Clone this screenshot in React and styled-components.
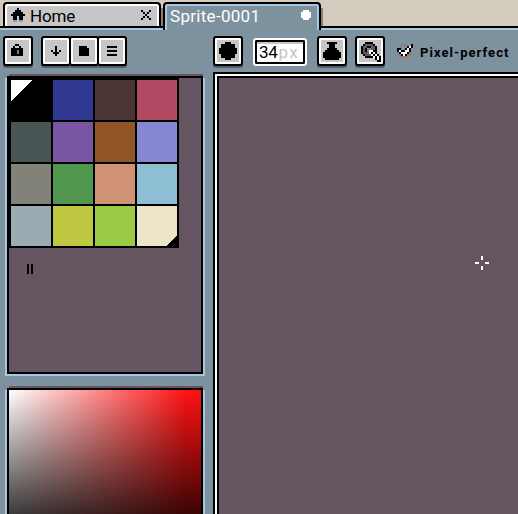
import React from "react";
import styled, { createGlobalStyle, css } from "styled-components";

const Global = createGlobalStyle`
  * { box-sizing: border-box; }
  html, body { margin: 0; overflow: hidden; background: #7d929e; }
  body { font-family: Roboto, "Liberation Sans", sans-serif; color: #000; }
  svg { display: block; flex: none; }
`;

const Window = styled.div`
  width: 518px;
  height: 514px;
  overflow: hidden;
  background: #7d929e;
  display: flex;
  flex-direction: column;
`;

const TabBar = styled.div`
  height: 30px;
  flex: none;
  display: flex;
  align-items: flex-start;
  padding: 2px 0 0 3px;
  background: linear-gradient(#d3cbbe 26px, #000 26px, #000 28px, #a5c8df 28px);
`;

const Tab = styled.div`
  display: flex;
  align-items: center;
  flex: none;
  height: ${(p) => (p.$active ? 28 : 24)}px;
  width: 158px;
  padding: ${(p) => (p.$active ? "0 8px 4px 5px" : "0 8px 0 6px")};
  border: 2px solid #000;
  border-bottom: 0;
  border-radius: 4px 4px 0 0;
  color: ${(p) => (p.$active ? "#fff" : "#000")};
  background: ${(p) => (p.$active ? "#7d929e" : "#c6c6c6")};
  box-shadow:
    inset 2px 2px 0 ${(p) => (p.$active ? "#a5c8df" : "#fff")},
    inset -2px 0 0 ${(p) => (p.$active ? "#a5c8df" : "#fff")};
`;

const TabShade = styled.div`
  width: 2px;
  height: 18px;
  margin-top: 6px;
  background: #967a6d;
`;

const Label = styled.span`
  font-size: 17px;
  line-height: 20px;
  padding-top: 2px;
  white-space: pre;
  letter-spacing: ${(p) => p.$spacing || 0}px;
  margin-left: ${(p) => p.$left || 0}px;
  flex: 1;
`;

const ToolBar = styled.div`
  height: 42px;
  flex: none;
  display: flex;
  align-items: flex-start;
  padding: 6px 0 0 3px;
`;

const Spacer = styled.div`
  width: ${(p) => p.$w}px;
  flex: none;
`;

const Button = styled.div`
  width: 30px;
  height: 30px;
  flex: none;
  display: flex;
  align-items: center;
  justify-content: center;
  border: 2px solid #000;
  border-radius: 3px;
  background: #c6c6c6;
  box-shadow: inset 0 0 0 2px #fff, 0 2px 0 #50606a;
  margin-left: ${(p) => (p.$joined ? -2 : 0)}px;
`;

const SizeField = styled.div`
  width: 54px;
  height: 28px;
  margin-top: 2px;
  flex: none;
  display: flex;
  align-items: center;
  border: 2px solid #fff;
  border-radius: 3px;
  box-shadow: inset 0 0 0 2px #000, inset 0 4px 0 #c6c6c6;
  background: #fff;
  padding: 0 0 0 4px;
  font-size: 17px;
  line-height: 20px;
  letter-spacing: -0.3px;
`;

const Unit = styled.span`
  color: #c6c6c6;
  letter-spacing: 1.4px;
  margin-left: 1px;
`;

const CheckLabel = styled.span`
  font-size: 13px;
  font-weight: 700;
  line-height: 16px;
  letter-spacing: 1.05px;
  margin: 9px 0 0 7px;
  white-space: nowrap;
`;

const Workspace = styled.div`
  flex: 1;
  display: flex;
  min-height: 0;
`;

const Sidebar = styled.div`
  width: 213px;
  flex: none;
  padding: 2px 8px 0 5px;
`;

const frame = css`
  border: 2px solid #000;
  box-shadow: -2px 2px 0 #a5c8df, 2px 2px 0 #a5c8df;
`;

const Ridge = styled.div`
  height: 2px;
  margin: 0 2px 0 4px;
  background: #655561;
`;

const PalettePanel = styled.div`
  ${frame}
  height: 298px;
  margin: 0 -1px 0 2px;
  width: 196px;
  background: #655561;
`;

const PaletteGrid = styled.div`
  display: grid;
  grid-template-columns: repeat(4, 40px);
  grid-auto-rows: 40px;
  gap: 2px;
  padding: 2px;
  width: 170px;
  background: #000;
`;

const Swatch = styled.div`
  background: ${(p) => p.$color};
  display: flex;
  justify-content: ${(p) => (p.$mark === "end" ? "flex-end" : "flex-start")};
  align-items: ${(p) => (p.$mark === "end" ? "flex-end" : "flex-start")};
`;

const ResizeHandle = styled.div`
  width: 6px;
  height: 10px;
  margin: 16px 0 0 18px;
  border: solid #000;
  border-width: 0 2px;
`;

const ColorPanel = styled.div`
  ${frame}
  height: 140px;
  width: 196px;
  margin: 0 -1px 0 2px;
  background: linear-gradient(to bottom, transparent, rgba(0, 0, 0, 0.84) 100%),
    linear-gradient(to right, #fff, #ff1414 92%, #ff1010);
`;

const Gap = styled.div`
  height: 12px;
`;

const Canvas = styled.div`
  flex: 1;
  background: #655561;
  border: solid #000;
  border-width: 2px 0 0 2px;
  box-shadow: inset 2px 2px 0 #fff, inset 4px 4px 0 #000;
  position: relative;
`;

const Cursor = styled.div`
  position: absolute;
  left: 260px;
  top: 182px;
`;

function PixelIcon({ rows, colors = {}, size = 2 }) {
  const w = Math.max(...rows.map((r) => r.length));
  return (
    <svg width={w * size} height={rows.length * size} viewBox={`0 0 ${w} ${rows.length}`} shapeRendering="crispEdges">
      {rows.flatMap((row, y) =>
        [...row].map((c, x) =>
          c === "." ? null : <rect key={`${x}-${y}`} x={x} y={y} width="1" height="1" fill={colors[c] || "#000"} />
        )
      )}
    </svg>
  );
}

const HOME = ["...#...", "..###..", ".#####.", "#######", ".##.##.", ".##.##.", ".gg.gg."];
const CLOSE = ["#...#", ".#.#.", "..#..", ".#.#.", "#...#"];
const DOT = [".###.", "#####", "#####", "#####", ".###."];
const LOCK = ["..##...", ".#..#..", "######.", "###g##.", "###g##.", "######.", "......."];
const DOWN = ["..#..", "..#..", "#.#.#", ".###.", "..#.."];
const FOLDER = ["####.", "#####", "#####", "#####", "#####"];
const MENU = ["#####", ".....", "#####", ".....", "#####"];
const BRUSH = ["...###...", ".#######.", ".#######.", "#########", "#########", "#########", ".#######.", ".#######.", "...###..."];
const INK = ["..#####..", "...###...", "...###...", "..#####..", ".#######.", "#########", "#########", "#########", ".#######."];
const SYMMETRY = [
  "...........",
  "...####....",
  "..#mmmm#...",
  ".#mm##mm#..",
  ".#m#ggmm#..",
  ".#m#gww##..",
  ".#mmmw#w#..",
  "..#mmmw#w#.",
  "...####w#w#",
  "........#w#",
  ".........##",
];
const CHECK = ["..bbb..#", ".b...#w#", "##..#w#.", "#w##ww#.", ".#www#b.", ".b#w#bb.", "..bbbb.."];
const CHECK_ROWS = ["........", "........", "........", "........", ...CHECK];
const CROSS = ["...#...", "...#...", ".......", "##...##", ".......", "...#...", "...#..."];

const PALETTE = [
  "#000", "#303892", "#4d3434", "#b24962", "#495555", "#7955a2", "#925528", "#8686d3",
  "#828279", "#51964f", "#cf9274", "#8ebed4", "#9caab2", "#bec840", "#9bcb45", "#ece5c9",
];

export default function App() {
  return (
    <Window>
      <Global />
      <TabBar>
        <Tab>
          <PixelIcon rows={HOME} colors={{ g: "#999" }} />
          <Label $left={5} $spacing={-0.2}>Home</Label>
          <PixelIcon rows={CLOSE} />
        </Tab>
        <TabShade />
        <Tab $active>
          <Label $spacing={0.3}>Sprite-0001</Label>
          <PixelIcon rows={DOT} colors={{ "#": "#fff" }} />
        </Tab>
        <TabShade />
      </TabBar>
      <ToolBar>
        <Button><PixelIcon rows={LOCK} colors={{ g: "#777" }} /></Button>
        <Spacer $w={8} />
        <Button><PixelIcon rows={DOWN} /></Button>
        <Button $joined><PixelIcon rows={FOLDER} /></Button>
        <Button $joined><PixelIcon rows={MENU} /></Button>
        <Spacer $w={86} />
        <Button><PixelIcon rows={BRUSH} /></Button>
        <Spacer $w={10} />
        <SizeField>34<Unit>px</Unit></SizeField>
        <Spacer $w={10} />
        <Button><PixelIcon rows={INK} /></Button>
        <Spacer $w={8} />
        <Button><PixelIcon rows={SYMMETRY} colors={{ m: "#655561", g: "#967a8a", w: "#fff" }} /></Button>
        <Spacer $w={12} />
        <PixelIcon rows={CHECK_ROWS} colors={{ b: "#967a6d", w: "#fff" }} />
        <CheckLabel>Pixel-perfect</CheckLabel>
      </ToolBar>
      <Workspace>
        <Sidebar>
          <Ridge />
          <PalettePanel>
            <PaletteGrid>
              {PALETTE.map((color, i) => (
                <Swatch key={color} $color={color} $mark={i === 15 ? "end" : "start"}>
                  {i === 0 && (
                    <svg width="21" height="21" shapeRendering="crispEdges"><path d="M0 0H21L0 21Z" fill="#fff" /></svg>
                  )}
                  {i === 15 && (
                    <svg width="11" height="11" shapeRendering="crispEdges"><path d="M11 0V11H0Z" /></svg>
                  )}
                </Swatch>
              ))}
            </PaletteGrid>
            <ResizeHandle />
          </PalettePanel>
          <Gap />
          <Ridge />
          <ColorPanel />
        </Sidebar>
        <Canvas>
          <Cursor><PixelIcon rows={CROSS} colors={{ "#": "#fff" }} /></Cursor>
        </Canvas>
      </Workspace>
    </Window>
  );
}
